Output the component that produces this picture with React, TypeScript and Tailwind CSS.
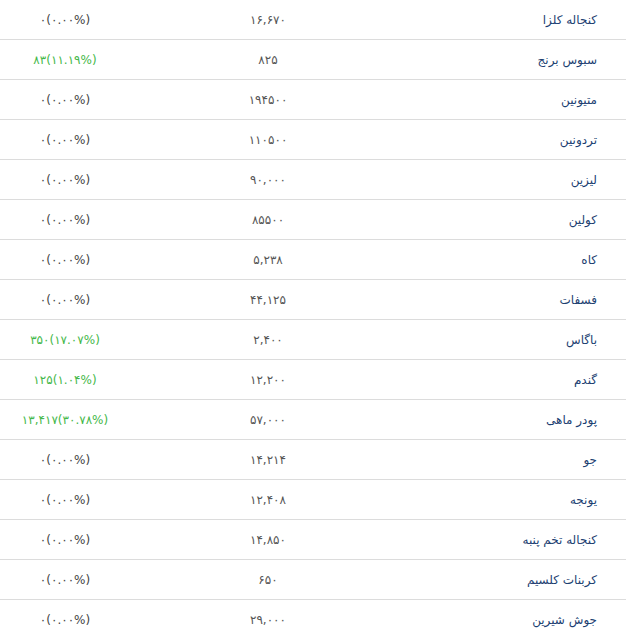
const rows: { name: string; price: string; change: string; up?: boolean }[] = [
  { name: 'کنجاله کلزا', price: '۱۶,۶۷۰', change: '۰(۰.۰۰%)' },
  { name: 'سبوس برنج', price: '۸۲۵', change: '۸۳(۱۱.۱۹%)', up: true },
  { name: 'متیونین', price: '۱۹۴۵۰۰', change: '۰(۰.۰۰%)' },
  { name: 'تردونین', price: '۱۱۰۵۰۰', change: '۰(۰.۰۰%)' },
  { name: 'لیزین', price: '۹۰,۰۰۰', change: '۰(۰.۰۰%)' },
  { name: 'کولین', price: '۸۵۵۰۰', change: '۰(۰.۰۰%)' },
  { name: 'کاه', price: '۵,۲۳۸', change: '۰(۰.۰۰%)' },
  { name: 'فسفات', price: '۴۴,۱۲۵', change: '۰(۰.۰۰%)' },
  { name: 'باگاس', price: '۲,۴۰۰', change: '۳۵۰(۱۷.۰۷%)', up: true },
  { name: 'گندم', price: '۱۲,۲۰۰', change: '۱۲۵(۱.۰۴%)', up: true },
  { name: 'پودر ماهی', price: '۵۷,۰۰۰', change: '۱۳,۴۱۷(۳۰.۷۸%)', up: true },
  { name: 'جو', price: '۱۴,۲۱۴', change: '۰(۰.۰۰%)' },
  { name: 'یونجه', price: '۱۲,۴۰۸', change: '۰(۰.۰۰%)' },
  { name: 'کنجاله تخم پنبه', price: '۱۴,۸۵۰', change: '۰(۰.۰۰%)' },
  { name: 'کربنات کلسیم', price: '۶۵۰', change: '۰(۰.۰۰%)' },
  { name: 'جوش شیرین', price: '۲۹,۰۰۰', change: '۰(۰.۰۰%)' },
];

export default function App() {
  return (
    <div
      dir="rtl"
      className="w-[626px] bg-white text-[12px] font-['DejaVu_Sans',sans-serif]"
    >
      {rows.map((r) => (
        <div
          key={r.name}
          className="grid h-10 grid-cols-[220px_276px_130px] items-center border-b border-[#dcdcdc]"
        >
          {/* name */}
          <div className="pr-[29px] text-right text-[#1d3f72]">{r.name}</div>
          {/* price */}
          <div dir="ltr" className="text-center tracking-[1px] text-[#555]">
            {r.price}
          </div>
          {/* change */}
          <div
            dir="ltr"
            className={`text-center tracking-[1px] ${r.up ? 'text-[#45b84a]' : 'text-[#444]'}`}
          >
            {r.change}
          </div>
        </div>
      ))}
    </div>
  );
}
